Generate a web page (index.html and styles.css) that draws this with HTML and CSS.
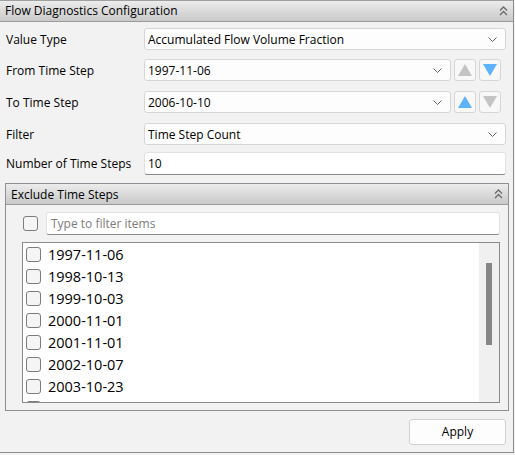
FILE: index.html
```html
<!DOCTYPE html>
<html>
<head>
<meta charset="utf-8">
<link rel="stylesheet" href="styles.css">
</head>
<body>
<div class="panel">
  <div class="header">
    <span class="title">Flow Diagnostics Configuration</span>
    <svg class="collapse" width="9" height="10" viewBox="0 0 9 10"><path d="M1 4.5 L4.5 1 L8 4.5 M1 9 L4.5 5.5 L8 9" fill="none" stroke="#6a6a6a" stroke-width="1.3"/></svg>
  </div>
  <div class="form">
    <div class="row r1">
      <span class="label">Value Type</span>
      <div class="combo grow"><span>Accumulated Flow Volume Fraction</span><svg class="chev" width="9" height="5" viewBox="0 0 9 5"><path d="M0.5 0.5 L4.5 4.5 L8.5 0.5" fill="none" stroke="#555" stroke-width="0.9"/></svg></div>
    </div>
    <div class="row r2">
      <span class="label">From Time Step</span>
      <div class="combo grow"><span>1997-11-06</span><svg class="chev" width="9" height="5" viewBox="0 0 9 5"><path d="M0.5 0.5 L4.5 4.5 L8.5 0.5" fill="none" stroke="#555" stroke-width="0.9"/></svg></div>
      <div class="stepbtn"><span class="tri up off"></span></div>
      <div class="stepbtn"><span class="tri down on"></span></div>
    </div>
    <div class="row r3">
      <span class="label">To Time Step</span>
      <div class="combo grow"><span>2006-10-10</span><svg class="chev" width="9" height="5" viewBox="0 0 9 5"><path d="M0.5 0.5 L4.5 4.5 L8.5 0.5" fill="none" stroke="#555" stroke-width="0.9"/></svg></div>
      <div class="stepbtn"><span class="tri up on"></span></div>
      <div class="stepbtn"><span class="tri down off"></span></div>
    </div>
    <div class="row r4">
      <span class="label">Filter</span>
      <div class="combo grow"><span>Time Step Count</span><svg class="chev" width="9" height="5" viewBox="0 0 9 5"><path d="M0.5 0.5 L4.5 4.5 L8.5 0.5" fill="none" stroke="#555" stroke-width="0.9"/></svg></div>
    </div>
    <div class="row r5">
      <span class="label">Number of Time Steps</span>
      <div class="textfield grow">10</div>
    </div>
  </div>
  <div class="group">
    <div class="gheader">
      <span class="gtitle">Exclude Time Steps</span>
      <svg class="collapse" width="9" height="10" viewBox="0 0 9 10"><path d="M1 4.5 L4.5 1 L8 4.5 M1 9 L4.5 5.5 L8 9" fill="none" stroke="#6a6a6a" stroke-width="1.3"/></svg>
    </div>
    <div class="gbody">
      <div class="filterrow">
        <span class="check"></span>
        <div class="filterinput">Type to filter items</div>
      </div>
      <div class="list">
        <div class="items">
          <div class="item"><span class="check"></span>1997-11-06</div>
          <div class="item"><span class="check"></span>1998-10-13</div>
          <div class="item"><span class="check"></span>1999-10-03</div>
          <div class="item"><span class="check"></span>2000-11-01</div>
          <div class="item"><span class="check"></span>2001-11-01</div>
          <div class="item"><span class="check"></span>2002-10-07</div>
          <div class="item"><span class="check"></span>2003-10-23</div>
          <div class="item"><span class="check"></span></div>
        </div>
        <div class="scrollbar"><div class="thumb"></div></div>
      </div>
    </div>
  </div>
  <div class="footer">
    <div class="button">Apply</div>
  </div>
</div>
</body>
</html>
```

FILE: styles.css
```css
html, body {
  margin: 0;
  padding: 0;
  background: #f3f2f2;
}
body {
  font-family: "Open Sans", "Noto Sans", sans-serif;
  font-size: 12px;
  color: #000;
}
.panel {
  width: 514px;
  height: 453px;
  box-sizing: border-box;
  border-right: 1px solid #8c8c8c;
  border-bottom: 1px solid #8c8c8c;
  background: #f3f2f2;
  display: flex;
  flex-direction: column;
}
.header {
  height: 22px;
  box-sizing: border-box;
  border-top: 1px solid #a0a0a0;
  border-bottom: 1px solid #9a9a9a;
  background: linear-gradient(#ececec, #c9c9c9);
  display: flex;
  align-items: center;
  justify-content: space-between;
  padding: 0 5px 0 5px;
}
.title { line-height: 20px; }
.collapse { display: block; }
.form {
  padding: 6px 7px 0 6px;
  display: flex;
  flex-direction: column;
}
.row {
  display: flex;
  align-items: center;
  height: 22px;
}
.r1 { margin-bottom: 9px; }
.r2 { margin-bottom: 10px; }
.r3 { margin-bottom: 10px; }
.r4 { margin-bottom: 7px; }
.r5 { height: 23px; }
.label {
  width: 138px;
  flex: none;
}
.grow { flex: 1; min-width: 0; }
.combo {
  height: 22px;
  box-sizing: border-box;
  border: 1px solid #d6d6d6;
  border-radius: 3px;
  background: #fdfdfd;
  display: flex;
  align-items: center;
  justify-content: space-between;
  padding: 0 8px 0 3px;
}
.chev { display: block; }
.stepbtn {
  width: 22px;
  height: 22px;
  box-sizing: border-box;
  margin-left: 3px;
  border: 1px solid #d6d6d6;
  border-radius: 3px;
  background: #f8f8f8;
  display: flex;
  align-items: center;
  justify-content: center;
  flex: none;
}
.r2 .stepbtn:last-child, .r3 .stepbtn:last-child { margin-right: 5px; }
.tri {
  width: 0;
  height: 0;
  border-left: 7px solid transparent;
  border-right: 7px solid transparent;
}
.tri.up { border-bottom: 12px solid; }
.tri.down { border-top: 12px solid; }
.tri.on { border-top-color: #5db3fb; border-bottom-color: #5db3fb; }
.tri.up.on { border-top-color: transparent; }
.tri.down.on { border-bottom-color: transparent; }
.tri.off { border-top-color: #c4c4c4; border-bottom-color: #c4c4c4; }
.tri.up.off { border-top-color: transparent; }
.tri.down.off { border-bottom-color: transparent; }
.textfield {
  height: 23px;
  box-sizing: border-box;
  border: 1px solid #e2e2e2;
  border-bottom: 1px solid #8a8a8a;
  border-radius: 3px;
  background: #fff;
  padding: 0 3px;
  line-height: 21px;
}
.group {
  margin: 8px 4px 0 5px;
  height: 228px;
  box-sizing: border-box;
  border: 1px solid #8e8e94;
  display: flex;
  flex-direction: column;
}
.gheader {
  height: 21px;
  flex: none;
  box-sizing: border-box;
  border-bottom: 1px solid #9a9a9a;
  background: linear-gradient(#ececec, #c9c9c9);
  display: flex;
  align-items: center;
  justify-content: space-between;
  padding: 0 5px 0 5px;
}
.gbody {
  padding: 7px 8px 0 16px;
  display: flex;
  flex-direction: column;
}
.filterrow {
  display: flex;
  align-items: center;
  height: 23px;
}
.check {
  width: 15px;
  height: 15px;
  box-sizing: border-box;
  border: 1px solid #7c7c7c;
  border-radius: 3px;
  background: #f5f5f5;
  flex: none;
}
.filterrow .check { margin-left: 1px; }
.filterinput {
  margin-left: 8px;
  flex: 1;
  height: 23px;
  box-sizing: border-box;
  border: 1px solid #e2e2e2;
  border-bottom: 1px solid #8a8a8a;
  border-radius: 3px;
  background: #fff;
  color: #7d7d7d;
  padding: 0 4px;
  line-height: 21px;
}
.list {
  margin-top: 7px;
  height: 161px;
  box-sizing: border-box;
  border: 1px solid #8a8a8a;
  background: #fff;
  display: flex;
  overflow: hidden;
}
.items {
  flex: 1;
  overflow: hidden;
}
.item {
  height: 22px;
  display: flex;
  align-items: center;
  font-size: 14.5px;
  padding-left: 3px;
}
.item .check { margin-right: 7px; }
.scrollbar {
  width: 20px;
  flex: none;
  background: #f0f0f0;
  display: flex;
  justify-content: center;
}
.thumb {
  width: 6px;
  height: 82px;
  margin-top: 20px;
  background: #868686;
}
.footer {
  display: flex;
  justify-content: flex-end;
  padding: 8px 7px 0 0;
}
.button {
  width: 97px;
  height: 26px;
  box-sizing: border-box;
  border: 1px solid #d0d0d0;
  border-radius: 3px;
  background: #fdfdfd;
  text-align: center;
  line-height: 24px;
}
```
